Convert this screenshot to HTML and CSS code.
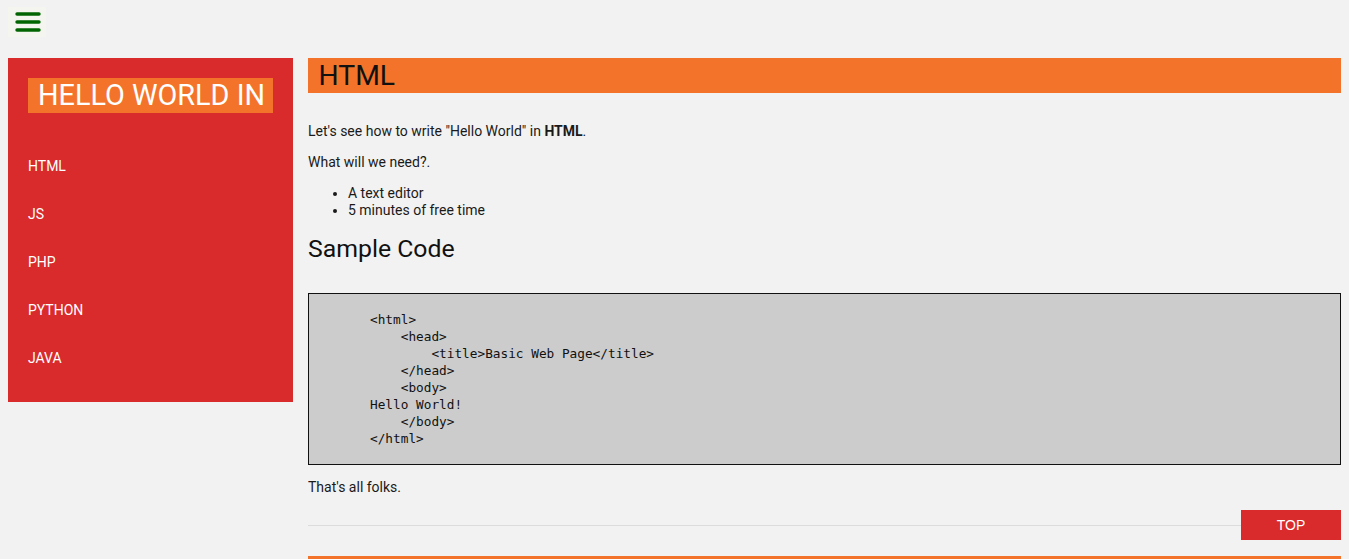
FILE: index.html
```html
<!DOCTYPE html>
<html lang="en">
<head>
<meta charset="utf-8">
<title>Hello World In</title>
<link rel="stylesheet" href="styles.css">
</head>
<body>
<header class="topbar">
  <button class="menu-btn" aria-label="Menu">
    <svg width="26" height="22" viewBox="0 0 26 22">
      <g stroke="#006400" stroke-width="3.4" stroke-linecap="round">
        <line x1="2" y1="3" x2="24" y2="3"/>
        <line x1="2" y1="11" x2="24" y2="11"/>
        <line x1="2" y1="19" x2="24" y2="19"/>
      </g>
    </svg>
  </button>
</header>
<div class="layout">
  <aside class="sidebar">
    <div class="brand">HELLO WORLD IN</div>
    <ul class="nav">
      <li>HTML</li>
      <li>JS</li>
      <li>PHP</li>
      <li>PYTHON</li>
      <li>JAVA</li>
    </ul>
  </aside>
  <main class="content">
    <h1 class="title">HTML</h1>
    <p class="p-first">Let's see how to write "Hello World" in <strong>HTML</strong>.</p>
    <p>What will we need?.</p>
    <ul class="needs">
      <li>A text editor</li>
      <li>5 minutes of free time</li>
    </ul>
    <h2 class="sub">Sample Code</h2>
    <pre class="code">&lt;html&gt;
    &lt;head&gt;
        &lt;title&gt;Basic Web Page&lt;/title&gt;
    &lt;/head&gt;
    &lt;body&gt;
Hello World!
    &lt;/body&gt;
&lt;/html&gt;</pre>
    <p class="end">That's all folks.</p>
    <div class="foot-row">
      <div class="rule"></div>
      <button class="top-btn">TOP</button>
    </div>
    <div class="orange-line"></div>
  </main>
</div>
</body>
</html>
```

FILE: styles.css
```css
html, body {
  margin: 0;
  padding: 0;
}
body {
  background: #f2f2f2;
  font-family: Roboto, "Noto Sans", sans-serif;
  color: #1a1a1a;
  padding: 0 8px;
  overflow: hidden;
}
.topbar {
  height: 58px;
  padding-top: 7px;
  box-sizing: border-box;
}
.menu-btn {
  display: flex;
  align-items: center;
  justify-content: center;
  width: 38px;
  height: 30px;
  margin: 0;
  padding: 0 0 0 1px;
  border: none;
  background: #f5f5f0;
}
.menu-btn svg {
  display: block;
}
.layout {
  display: flex;
  gap: 15px;
  align-items: flex-start;
}
.sidebar {
  width: 285px;
  flex: none;
  background: #d92a2c;
  padding: 20px 20px 20px;
  box-sizing: border-box;
}
.brand {
  background: #f4732a;
  color: #fff;
  font-size: 28.8px;
  line-height: 35px;
  padding-left: 10px;
  white-space: nowrap;
}
.nav {
  list-style: none;
  margin: 29px 0 0;
  padding: 0;
}
.nav li {
  color: #fff;
  font-size: 14px;
  height: 48px;
  line-height: 48px;
}
.content {
  flex: 1;
  min-width: 0;
}
.title {
  margin: 0;
  background: #f4732a;
  font-size: 28.3px;
  font-weight: 400;
  line-height: 35px;
  padding-left: 10.5px;
  color: #111;
}
.content p {
  font-size: 14px;
  line-height: 17px;
  margin: 14px 0;
}
.content .p-first {
  margin-top: 29.5px;
}
.content strong {
  font-weight: 700;
}
.needs {
  font-size: 14px;
  line-height: 17px;
  margin: 14px 0 0;
  padding-left: 40px;
}
.sub {
  font-size: 24.8px;
  font-weight: 400;
  line-height: 28px;
  margin: 16px 0 0;
  color: #111;
}
.code {
  margin: 30.5px 0 0;
  background: #cccccc;
  border: 1px solid #111;
  padding: 16.5px 0 17.5px 61px;
  font-family: "DejaVu Sans Mono", "Liberation Mono", monospace;
  font-size: 12.75px;
  line-height: 17px;
  color: #111;
}
.content .end {
  margin: 13.5px 0 0;
}
.foot-row {
  display: flex;
  align-items: center;
  margin-top: 14.5px;
}
.rule {
  flex: 1;
  height: 1px;
  background: #dcdcdc;
}
.top-btn {
  width: 100px;
  height: 30px;
  border: none;
  margin: 0;
  padding: 0;
  background: #d92a2c;
  color: #fff;
  font-family: "Liberation Sans", Arial, sans-serif;
  font-size: 14px;
}
.orange-line {
  margin-top: 16px;
  height: 4px;
  background: #f4732a;
}
```
